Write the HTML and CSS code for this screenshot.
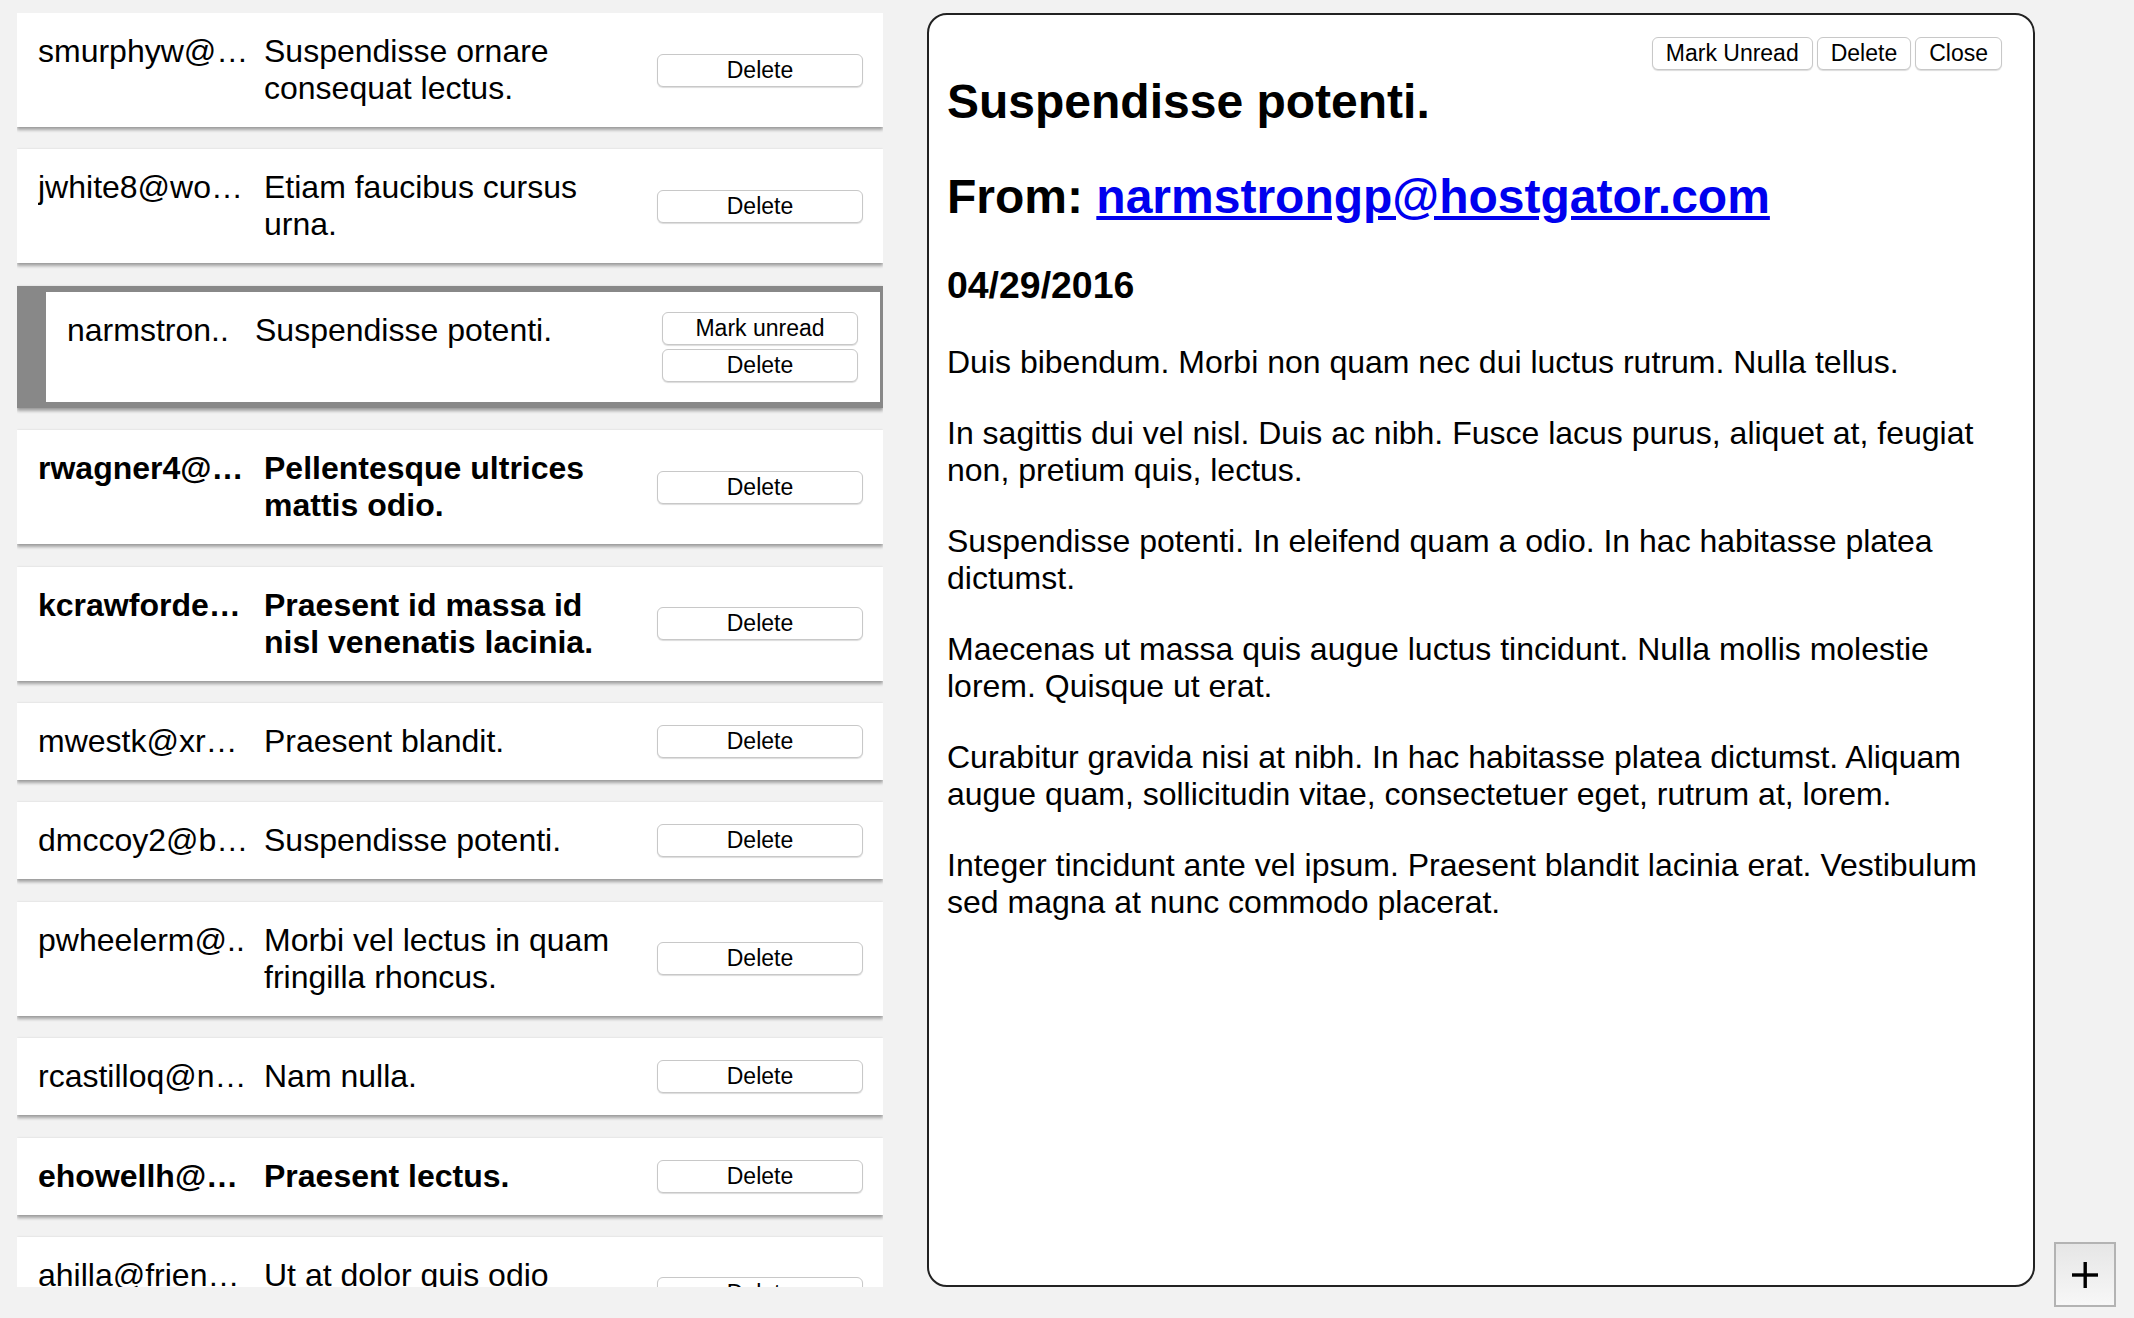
FILE: index.html
```html
<!DOCTYPE html>
<html>
<head>
<meta charset="utf-8">
<title>Mail</title>
<link rel="stylesheet" href="styles.css">
</head>
<body>
<div class="app">
  <div class="list">
    <div class="card">
      <div class="sender">smurphyw@…</div>
      <div class="subject">Suspendisse ornare consequat lectus.</div>
      <div class="actions"><button class="btn">Delete</button></div>
    </div>
    <div class="card">
      <div class="sender">jwhite8@wo…</div>
      <div class="subject">Etiam faucibus cursus urna.</div>
      <div class="actions"><button class="btn">Delete</button></div>
    </div>
    <div class="card selected">
      <div class="sender">narmstron..</div>
      <div class="subject">Suspendisse potenti.</div>
      <div class="actions"><button class="btn">Mark unread</button><button class="btn">Delete</button></div>
    </div>
    <div class="card unread">
      <div class="sender">rwagner4@…</div>
      <div class="subject">Pellentesque ultrices mattis odio.</div>
      <div class="actions"><button class="btn">Delete</button></div>
    </div>
    <div class="card unread">
      <div class="sender">kcrawforde…</div>
      <div class="subject">Praesent id massa id nisl venenatis lacinia.</div>
      <div class="actions"><button class="btn">Delete</button></div>
    </div>
    <div class="card">
      <div class="sender">mwestk@xr…</div>
      <div class="subject">Praesent blandit.</div>
      <div class="actions"><button class="btn">Delete</button></div>
    </div>
    <div class="card">
      <div class="sender">dmccoy2@b…</div>
      <div class="subject">Suspendisse potenti.</div>
      <div class="actions"><button class="btn">Delete</button></div>
    </div>
    <div class="card">
      <div class="sender">pwheelerm@..</div>
      <div class="subject">Morbi vel lectus in quam fringilla rhoncus.</div>
      <div class="actions"><button class="btn">Delete</button></div>
    </div>
    <div class="card">
      <div class="sender">rcastilloq@n…</div>
      <div class="subject">Nam nulla.</div>
      <div class="actions"><button class="btn">Delete</button></div>
    </div>
    <div class="card unread">
      <div class="sender">ehowellh@…</div>
      <div class="subject">Praesent lectus.</div>
      <div class="actions"><button class="btn">Delete</button></div>
    </div>
    <div class="card">
      <div class="sender">ahilla@frien…</div>
      <div class="subject">Ut at dolor quis odio consequat varius.</div>
      <div class="actions"><button class="btn">Delete</button></div>
    </div>
  </div>
  <div class="detail">
    <div class="toolbar">
      <button class="btn tbtn">Mark Unread</button>
      <button class="btn tbtn">Delete</button>
      <button class="btn tbtn">Close</button>
    </div>
    <h2 class="title">Suspendisse potenti.</h2>
    <h2 class="from">From: <a href="#">narmstrongp@hostgator.com</a></h2>
    <h3 class="date">04/29/2016</h3>
    <p>Duis bibendum. Morbi non quam nec dui luctus rutrum. Nulla tellus.</p>
    <p>In sagittis dui vel nisl. Duis ac nibh. Fusce lacus purus, aliquet at, feugiat non, pretium quis, lectus.</p>
    <p>Suspendisse potenti. In eleifend quam a odio. In hac habitasse platea dictumst.</p>
    <p>Maecenas ut massa quis augue luctus tincidunt. Nulla mollis molestie lorem. Quisque ut erat.</p>
    <p>Curabitur gravida nisi at nibh. In hac habitasse platea dictumst. Aliquam augue quam, sollicitudin vitae, consectetuer eget, rutrum at, lorem.</p>
    <p>Integer tincidunt ante vel ipsum. Praesent blandit lacinia erat. Vestibulum sed magna at nunc commodo placerat.</p>
  </div>
</div>
<button class="fab" aria-label="New message"><svg width="26" height="26" viewBox="0 0 26 26"><rect x="11.5" y="0" width="3.4" height="26" fill="#000"/><rect x="0" y="11.3" width="26" height="3.4" fill="#000"/></svg></button>
</body>
</html>
```

FILE: styles.css
```css
html, body {
  margin: 0;
  padding: 0;
  background: #f2f2f2;
  font-family: "Liberation Sans", Arial, sans-serif;
  color: #000;
}

.app {
  display: flex;
  gap: 44px;
  padding: 13px 0 0 17px;
  height: 1287px;
  box-sizing: border-box;
}

.list {
  width: 866px;
  height: 1274px;
  overflow: hidden;
  flex: none;
}

.card {
  display: flex;
  align-items: flex-start;
  background: #fff;
  padding: 20px 20px 20px 21px;
  margin-bottom: 22.4px;
  font-size: 32px;
  line-height: normal;
  box-shadow: 0 3px 3px rgba(0, 0, 0, 0.32), 0 0 2px rgba(0, 0, 0, 0.12);
  box-sizing: border-box;
  width: 866px;
}

.card.unread {
  font-weight: bold;
}

.card.selected {
  border: 6px solid #888;
  border-left-width: 29px;
  border-right-width: 3px;
  padding: 20px 22px 20px 21px;
}

.sender {
  width: 226px;
  flex: none;
  white-space: nowrap;
  overflow: hidden;
}

.card.selected .sender {
  width: 188px;
}

.subject {
  flex: 1;
  min-width: 0;
}

.actions {
  flex: none;
  width: 206px;
  margin-left: 24px;
  align-self: center;
  display: flex;
  flex-direction: column;
  gap: 4px;
}

.card.selected .actions {
  width: 196px;
}

.btn {
  height: 33px;
  padding: 0;
  font-family: "Liberation Sans", Arial, sans-serif;
  font-size: 23px;
  font-weight: normal;
  color: #000;
  background: #fff;
  border: 1px solid #c8c8c8;
  border-radius: 6px;
  box-shadow: 0 1px 1px rgba(0, 0, 0, 0.14);
  line-height: 31px;
}

.detail {
  flex: none;
  width: 1108px;
  height: 1274px;
  box-sizing: border-box;
  border: 2px solid #222;
  border-radius: 20px;
  background: #fff;
  padding: 22px 18px;
  overflow: hidden;
}

.toolbar {
  display: flex;
  justify-content: flex-end;
  gap: 4px;
  margin-right: 13px;
}

.tbtn {
  padding: 0 13px;
}

.title {
  font-size: 48px;
  margin: 4px 0 40px;
}

.from {
  font-size: 48px;
  margin: 40px 0;
}

.from a {
  color: #0000ee;
  text-decoration: underline;
}

.date {
  font-size: 37.44px;
  margin: 37px 0;
}

.detail p {
  font-size: 32px;
  margin: 34px 0;
}

.fab {
  position: fixed;
  right: 18px;
  bottom: 11px;
  width: 62px;
  height: 65px;
  padding: 0;
  border: 2px solid #b3b3b3;
  background: linear-gradient(#e6e6e6, #f7f7f7);
  display: flex;
  align-items: center;
  justify-content: center;
}
```
